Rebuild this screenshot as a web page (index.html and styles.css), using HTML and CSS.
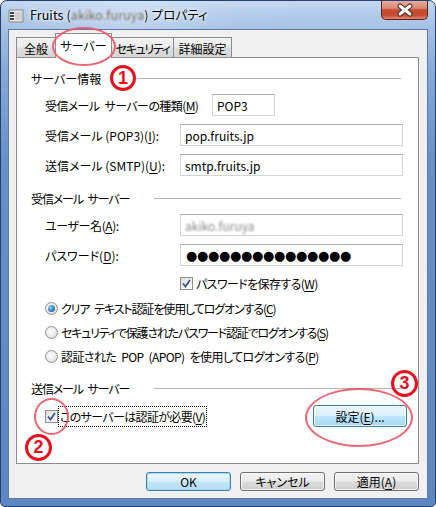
FILE: index.html
```html
<!DOCTYPE html>
<html lang="ja">
<head>
<meta charset="utf-8">
<title>Fruits プロパティ</title>
<link rel="stylesheet" href="styles.css">
</head>
<body>
<div class="window">
  <div class="titlebar">
    <svg class="appicon" viewBox="0 0 16 16" width="16" height="16">
      <rect x="1" y="2" width="14" height="12" fill="#e6e6e6" stroke="#8a8a8a"/>
      <rect x="2" y="4" width="4" height="2" fill="#444"/>
      <rect x="2" y="7" width="4" height="2" fill="#444"/>
      <rect x="2" y="10" width="4" height="2" fill="#444"/>
      <rect x="7" y="4" width="7" height="8" fill="#cfcfcf"/>
    </svg>
    <span class="title">Fruits (<span class="blur">akiko.furuya</span>) プロパティ</span>
    <div class="close">
      <svg viewBox="0 0 20 14" width="20" height="14">
        <path d="M5 3 L15 11 M15 3 L5 11" stroke="#4a2620" stroke-width="5" stroke-linecap="round"/>
        <path d="M5 3 L15 11 M15 3 L5 11" stroke="#ffffff" stroke-width="3" stroke-linecap="round"/>
      </svg>
    </div>
  </div>
  <div class="client">
    <div class="tabs">
      <div class="tab t1">全般</div>
      <div class="tab t2 active">サーバー</div>
      <div class="tab t3"><span class="tab-tight">セキュリティ</span></div>
      <div class="tab t4">詳細設定</div>
    </div>
    <div class="panel">
      <div class="section-head first"><span class="label">サーバー情報</span><span class="rule"></span></div>
      <div class="field f-first"><span class="flabel wide ls-m">受信メール サーバーの種類(<u>M</u>)</span><span class="input small">POP3</span></div>
      <div class="field"><span class="flabel">受信メール (POP3)(<u>I</u>):</span><span class="input">pop.fruits.jp</span></div>
      <div class="field"><span class="flabel">送信メール (SMTP)(<u>U</u>):</span><span class="input">smtp.fruits.jp</span></div>

      <div class="section-head second"><span class="label ls-l">受信メール サーバー</span><span class="rule"></span></div>
      <div class="field f-first"><span class="flabel ls-s">ユーザー名(<u>A</u>):</span><span class="input"><span class="blur gray">akiko.furuya</span></span></div>
      <div class="field"><span class="flabel">パスワード(<u>D</u>):</span><span class="input"><span class="dots">●●●●●●●●●●●●●●●</span></span></div>
      <div class="check-row savepw"><span class="cb"><svg viewBox="0 0 11 11" width="11" height="11"><path d="M2 5.5 L4.5 8.5 L9 2" fill="none" stroke="#41538a" stroke-width="1.8"/></svg></span><span class="ls-m">パスワードを保存する(<u>W</u>)</span></div>
      <div class="radio-row r1"><span class="radio on"></span><span class="ls-l">クリア テキスト認証を使用してログオンする(<u>C</u>)</span></div>
      <div class="radio-row"><span class="radio"></span><span class="ls-xl">セキュリティで保護されたパスワード認証でログオンする(<u>S</u>)</span></div>
      <div class="radio-row"><span class="radio"></span><span class="ls-m">認証された POP (APOP) を使用してログオンする(<u>P</u>)</span></div>

      <div class="section-head third"><span class="label ls-l">送信メール サーバー</span><span class="rule"></span></div>
      <div class="auth-row">
        <span class="cb"><svg viewBox="0 0 11 11" width="11" height="11"><path d="M2 5.5 L4.5 8.5 L9 2" fill="none" stroke="#41538a" stroke-width="1.8"/></svg></span>
        <span class="focus ls-m2">このサーバーは認証が必要(<u>V</u>)</span>
        <span class="btn hover setting">設定(<u>E</u>)...</span>
      </div>
    </div>
    <div class="buttons">
      <span class="btn default">OK</span>
      <span class="btn">キャンセル</span>
      <span class="btn">適用(<u>A</u>)</span>
    </div>
  </div>

  <span class="ellipse e-tab"></span>
  <span class="ellipse e-check"></span>
  <span class="ellipse e-btn"></span>
  <span class="num n1">1</span>
  <span class="num n2">2</span>
  <span class="num n3">3</span>
</div>
</body>
</html>
```

FILE: styles.css
```css
* { box-sizing: border-box; }
html, body { margin: 0; padding: 0; }
body {
  width: 436px;
  height: 507px;
  overflow: hidden;
  background: #ffffff;
  font-family: "Noto Sans CJK JP", "Noto Sans", sans-serif;
  font-size: 12px;
  color: #000;
  font-feature-settings: "palt";
  white-space: nowrap;
}
u { text-decoration: underline; text-underline-offset: 2px; }

.ls-s { letter-spacing: -0.4px; word-spacing: 3px; }
.ls-m { letter-spacing: -0.6px; word-spacing: 3px; }
.ls-m2 { letter-spacing: -0.65px; word-spacing: 3px; }
.ls-l { letter-spacing: -1.1px; word-spacing: 3px; }
.ls-xl { letter-spacing: -1.2px; word-spacing: 3px; }

.window {
  position: relative;
  width: 436px;
  height: 507px;
  border: 1px solid #22416d;
  border-radius: 7px 7px 5px 5px;
  background: linear-gradient(180deg, #c4d8f0 0px, #b2cbea 12px, #a4c0e4 28px, #86a9d8 70px, #6790c9 160px, #5d87c2 100%);
  display: flex;
  flex-direction: column;
  overflow: hidden;
}

.titlebar {
  height: 28px;
  flex: none;
  display: flex;
  align-items: center;
  padding-left: 7px;
  padding-bottom: 1px;
  background: linear-gradient(100deg, rgba(255,255,255,0) 0%, rgba(255,255,255,0.25) 30%, rgba(255,255,255,0.05) 55%, rgba(255,255,255,0) 100%);
}
.appicon { flex: none; margin-right: 6px; margin-top: 2px; }
.title {
  font-size: 12.5px;
  letter-spacing: 0.1px;
  text-shadow: 0 0 5px #fff, 0 0 3px #fff;
}
.blur { filter: blur(1.1px); color: #555; }
.blur.gray { color: #8a8a8a; }

.close {
  position: absolute;
  right: 7px;
  top: 0;
  width: 47px;
  height: 19px;
  border: 1px solid #5a2219;
  border-top: none;
  border-radius: 0 0 5px 5px;
  background: linear-gradient(180deg, #e8ad9f 0%, #d98873 40%, #c24a30 50%, #c74e34 80%, #de8a72 100%);
  display: flex;
  align-items: center;
  justify-content: center;
}

.client {
  flex: 1;
  margin: 0 7px 7px 7px;
  border: 1px solid #5c79a2;
  background: #f0f0f0;
  padding: 7px 8px 0 7px;
  display: flex;
  flex-direction: column;
}

.tabs {
  height: 20px;
  flex: none;
  display: flex;
  align-items: flex-end;
}
.tab {
  height: 20px;
  border: 1px solid #898c95;
  border-bottom: none;
  border-right: none;
  background: linear-gradient(180deg, #f3f3f3 0%, #ebebeb 45%, #dddddd 55%, #d6d6d6 100%);
  display: flex;
  align-items: center;
  justify-content: center;
  padding-top: 1px;
}
.tab-tight { letter-spacing: -1.4px; }
.tab.t4 { border-right: 1px solid #898c95; }
.t1 { width: 39px; }
.t2 { width: 57px; }
.t3 { width: 61px; }
.t4 { width: 59px; }
.tab.active {
  position: relative;
  z-index: 2;
  height: 25px;
  margin-bottom: -1px;
  background: #ffffff;
  border-right: 1px solid #898c95;
  padding-bottom: 3px;
}
.tab.active + .tab { border-left: none; }

.panel {
  height: 407px;
  flex: none;
  border: 1px solid #898c95;
  background: #ffffff;
  display: flex;
  flex-direction: column;
}

.section-head {
  height: 20px;
  display: flex;
  align-items: center;
  padding-left: 14px;
  margin-right: 17px;
}
.section-head .label { flex: none; }
.section-head.first { margin-top: 10px; }
.section-head.first .label { width: 106px; }
.section-head.second { margin-top: 12px; }
.section-head.second .label,
.section-head.third .label { width: 123px; }
.section-head.third { margin-top: 14px; }
.section-head .rule { flex: 1; height: 1px; background: #b4b4b4; }

.field {
  height: 22px;
  display: flex;
  align-items: center;
  padding-left: 28px;
  margin-top: 8px;
}
.field.f-first { margin-top: 6px; }
.flabel { width: 135px; flex: none; }
.flabel.wide { width: 167px; }
.input {
  width: 223px;
  height: 22px;
  border: 1px solid #d0d4da;
  border-top-color: #abadb3;
  padding: 0 4px;
  display: flex;
  align-items: center;
  background: #fff;
}
.input.small { width: 63px; }
.dots {
  font-family: "DejaVu Sans", sans-serif;
  font-size: 13px;
  letter-spacing: -0.35px;
  margin-left: 1px;
}

.check-row, .radio-row {
  height: 16px;
  display: flex;
  align-items: center;
}
.savepw { padding-left: 163px; margin-top: 9px; }
.radio-row { padding-left: 28px; margin-top: 8px; }
.radio-row.r1 { margin-top: 9px; }

.cb {
  width: 13px;
  height: 13px;
  flex: none;
  border: 1px solid #8e8f8f;
  background: linear-gradient(135deg, #dcdcdc 0%, #f4f4f4 70%, #ffffff 100%);
  margin-right: 3px;
  display: flex;
  align-items: center;
  justify-content: center;
}
.radio {
  width: 13px;
  height: 13px;
  flex: none;
  border-radius: 50%;
  border: 1px solid #8e8f8f;
  background: radial-gradient(circle at 40% 40%, #ffffff 0%, #e6e6e6 60%, #cfcfcf 100%);
  margin-right: 3px;
  position: relative;
}
.radio.on::after {
  content: "";
  position: absolute;
  left: 2px; top: 2px;
  width: 7px; height: 7px;
  border-radius: 50%;
  background: radial-gradient(circle at 35% 35%, #9cd4f4 0%, #2a82c4 55%, #164f86 100%);
}

.auth-row {
  height: 22px;
  margin-top: 7px;
  display: flex;
  align-items: center;
  padding-left: 28px;
}
.auth-row .cb { margin-right: 1px; }
.focus {
  outline: 1px dotted #000;
  outline-offset: 0;
  padding: 1px 1px;
}

.btn {
  height: 19px;
  width: 85px;
  border: 1px solid #707070;
  border-radius: 3px;
  background: linear-gradient(180deg, #f2f2f2 0%, #ebebeb 48%, #dddddd 52%, #cfcfcf 100%);
  display: flex;
  align-items: center;
  justify-content: center;
  box-shadow: inset 0 0 0 1px rgba(255,255,255,0.7);
}
.btn.default {
  border-color: #3c7fb1;
  box-shadow: inset 0 0 0 1px #a7d9f5;
  background: linear-gradient(180deg, #eaf6fd 0%, #d9f0fc 48%, #c4e6f9 52%, #b6dcf2 100%);
}
.btn.hover {
  border-color: #3c7fb1;
  background: linear-gradient(180deg, #eaf6fd 0%, #d9f0fc 48%, #bee6fd 52%, #a7d9f5 100%);
}
.setting {
  width: 94px;
  height: 22px;
  margin-left: auto;
  margin-right: 11px;
}

.buttons {
  margin-top: 8px;
  display: flex;
  justify-content: flex-end;
  gap: 9px;
}

.ellipse {
  position: absolute;
  border: 2.5px solid rgba(236, 84, 98, 0.9);
  border-radius: 50%;
  z-index: 5;
}
.e-tab { left: 51px; top: 26px; width: 64px; height: 39px; }
.e-check { left: 33px; top: 397px; width: 35px; height: 37px; }
.e-btn { left: 304px; top: 387px; width: 108px; height: 59px; }

.num {
  position: absolute;
  z-index: 6;
  width: 27px;
  height: 27px;
  border: 3px solid #e8101e;
  border-radius: 50%;
  color: #e8101e;
  font-family: "Liberation Sans", Arial, sans-serif;
  font-weight: bold;
  font-size: 18px;
  line-height: 21px;
  text-align: center;
}
.n1 { left: 109px; top: 64px; width: 26px; height: 26px; line-height: 20px; }
.n2 { left: 24px; top: 433px; }
.n3 { left: 390px; top: 369px; }
```
